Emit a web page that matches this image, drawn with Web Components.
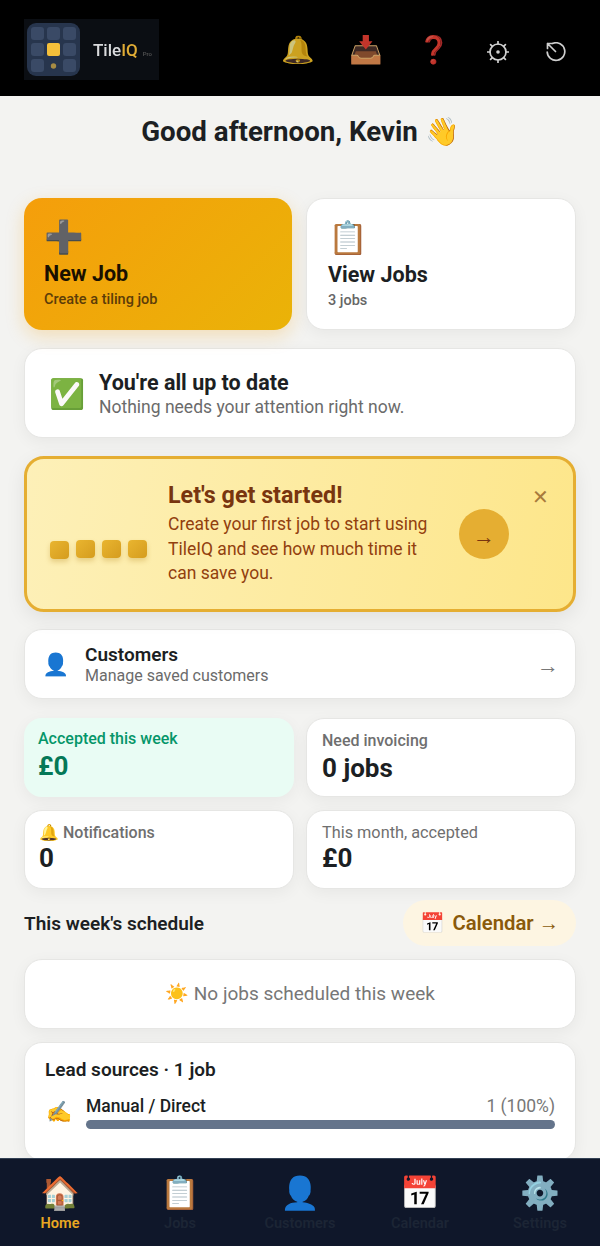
<!DOCTYPE html>
<html lang="en">
<head>
<meta charset="utf-8">
<title>TileIQ</title>
<style>
html, body { margin: 0; height: 100%; background: #f3f3f1; }
body { font-family: Roboto, "Liberation Sans", sans-serif; color: #1c1f23; }
</style>
</head>
<body>
<app-shell>
	<top-bar slot="top"></top-bar>
	<greeting-line>Good afternoon, Kevin 👋</greeting-line>
	<div style="display:grid;grid-template-columns:268px 270px;column-gap:14px;margin-top:50px">
		<action-card primary icon="➕" title="New Job" sub="Create a tiling job"></action-card>
		<action-card icon="📋" title="View Jobs" sub="3 jobs"></action-card>
	</div>
	<status-card></status-card>
	<start-banner></start-banner>
	<link-row></link-row>
	<div style="display:grid;grid-template-columns:270px 270px;gap:13px 12px;margin-top:19px">
		<stat-card green label="Accepted this week" value="£0"></stat-card>
		<stat-card label="Need invoicing" value="0 jobs"></stat-card>
		<stat-card small left label="🔔 Notifications" value="0"></stat-card>
		<stat-card small thin label="This month, accepted" value="£0"></stat-card>
	</div>
	<schedule-head></schedule-head>
	<empty-card>☀️ No jobs scheduled this week</empty-card>
	<lead-card></lead-card>
	<bottom-nav slot="nav"></bottom-nav>
</app-shell>

<script>
const card = 'background:#fff;border:1px solid #e6e6e4;border-radius:18px;box-shadow:0 4px 16px rgba(0,0,0,.05);box-sizing:border-box;';

class AppShell extends HTMLElement {
	constructor() {
		super();
		this.attachShadow({mode: 'open'}).innerHTML = `
	<style>
	:host { display: flex; flex-direction: column; height: 1246px; overflow: hidden; }
	main { flex: 1; min-height: 0; overflow: hidden; padding: 0 24px; display: block; }
	</style>
	<slot name="top"></slot>
	<main><slot></slot></main>
	<slot name="nav"></slot>`;
	}
}

class TopBar extends HTMLElement {
	constructor() {
		super();
		this.attachShadow({mode: 'open'}).innerHTML = `
	<style>
	:host { display: flex; align-items: center; height: 96px; background: #000; padding: 0 35px 0 24px; box-sizing: border-box; }
	.logo { width: 135px; height: 61px; margin-top: 3px; background: #0b0e13; display: flex; align-items: center; box-sizing: border-box; padding-left: 3px; flex: none; filter: blur(.5px); }
	.name { font-size: 17px; font-weight: 500; color: #d9dadc; margin-left: 13px; }
	.name b { color: #e0ac35; font-weight: 500; }
	.pro { font-size: 6px; color: #555; margin-left: 5px; }
	.icons { margin-left: auto; display: flex; align-items: center; gap: 38px; margin-top: 3px; }
	.icons span { font-size: 27px; width: 30px; display: flex; justify-content: center; line-height: 30px; opacity: .8; }
	svg.line { display: block; margin-top: 5px; }
	</style>
	<div class="logo">
		<svg width="53" height="53" viewBox="0 0 53 53">
			<rect width="53" height="53" rx="9" fill="#27354d"/>
			<g fill="#3a4a66">
				<rect x="4" y="4" width="13" height="13" rx="3"/><rect x="20" y="4" width="13" height="13" rx="3"/><rect x="36" y="4" width="13" height="13" rx="3"/>
				<rect x="4" y="20" width="13" height="13" rx="3"/><rect x="36" y="20" width="13" height="13" rx="3"/>
				<rect x="4" y="36" width="13" height="13" rx="3"/><rect x="36" y="36" width="13" height="13" rx="3"/>
			</g>
			<rect x="20" y="20" width="13" height="13" rx="2" fill="#f4bf3a"/>
			<circle cx="26.500" cy="43" r="2.700" fill="#a78c44"/>
		</svg>
		<span class="name">Tile<b>IQ</b><span class="pro">Pro</span></span>
	</div>
	<div class="icons">
		<span>🔔</span><span>📥</span><span>❓</span>
		<svg class="line" width="22" height="22" viewBox="0 0 22 22" fill="none" stroke="#cfcfcf" stroke-width="1.700">
			<circle cx="11" cy="11" r="8"/>
			<circle cx="11" cy="11" r="1.800" fill="#cfcfcf" stroke="none"/>
			<path d="M11 .5v2.500M11 19v2.500M.5 11H3M19 11h2.500M3.600 3.600l1.700 1.700M16.700 16.700l1.700 1.700M18.400 3.600l-1.700 1.700M5.300 16.700l-1.700 1.700" stroke-linecap="round"/>
		</svg>
		<svg class="line" width="20" height="20" viewBox="0 0 20 20" fill="none" stroke="#cfcfcf" stroke-width="1.700" stroke-linecap="round" stroke-linejoin="round" style="margin-left:-1px;margin-right:-1px">
			<path d="M7 1.300A8.800 8.800 0 1 1 1.200 10"/>
			<path d="M9.500 9.500L1.500 1.500M1.500 6.500v-5h5"/>
		</svg>
	</div>`;
	}
}

class GreetingLine extends HTMLElement {
	constructor() {
		super();
		this.attachShadow({mode: 'open'}).innerHTML = `
	<style>
	:host { display: block; text-align: center; font-size: 27.700px; font-weight: 700; line-height: 32px; margin-top: 20px; }
	</style>
	<slot></slot>`;
	}
}

class ActionCard extends HTMLElement {
	constructor() {
		super();
		this.attachShadow({mode: 'open'}).innerHTML = `
	<style>
	:host { display: block; height: 132px; ${card} padding: 20px 21px; }
	:host([primary]) { background: linear-gradient(135deg, #f59e0b, #eab308); border: 0; padding: 20px; box-shadow: 0 6px 18px rgba(245,158,11,.25); }
	.i { font-size: 32px; line-height: 38px; }
	.t { font-size: 21.500px; font-weight: 700; line-height: 28px; margin-top: 4px; color: #1c1f23; }
	:host([primary]) .t { color: #1a1000; }
	.s { font-size: 14.500px; font-weight: 500; color: #666; margin-top: 3px; }
	:host([primary]) .s { color: #5c3d08; }
	</style>
	<div class="i">${this.getAttribute('icon')}</div>
	<div class="t">${this.getAttribute('title')}</div>
	<div class="s">${this.getAttribute('sub')}</div>`;
	}
}

class StatusCard extends HTMLElement {
	constructor() {
		super();
		this.attachShadow({mode: 'open'}).innerHTML = `
	<style>
	:host { display: flex; align-items: center; gap: 14px; height: 90px; margin-top: 18px; ${card} padding: 2px 24px 0; }
	.i { font-size: 29px; }
	.t { font-size: 21.500px; font-weight: 700; line-height: 26px; }
	.s { font-size: 17.500px; color: #6b6b6b; line-height: 23px; }
	</style>
	<div class="i">✅</div>
	<div><div class="t">You're all up to date</div><div class="s">Nothing needs your attention right now.</div></div>`;
	}
}

class StartBanner extends HTMLElement {
	constructor() {
		super();
		this.attachShadow({mode: 'open'}).innerHTML = `
	<style>
	:host { display: flex; position: relative; height: 156px; margin-top: 18px; box-sizing: border-box; border: 3px solid #e5ae32; border-radius: 20px; background: linear-gradient(100deg, #fdf0b8, #fde68a); box-shadow: 0 6px 20px rgba(0,0,0,.08); }
	.tiles { display: flex; gap: 7.500px; align-items: flex-end; width: 118px; padding: 0 0 51px 23px; box-sizing: border-box; flex: none; }
	.tiles i { flex: none; width: 18.500px; height: 18.500px; border-radius: 4px; background: linear-gradient(135deg, #e9b530, #d59c1e); box-shadow: 0 3px 5px rgba(180,130,20,.3); }
	.tiles i:first-child { margin-bottom: -1px; }
	.text { padding: 22px 0 0 23px; width: 295px; box-sizing: border-box; flex: none; }
	.t { font-size: 23.300px; font-weight: 700; color: #78350f; line-height: 28px; }
	.s { font-size: 17.500px; line-height: 24.500px; color: #92400e; margin-top: 3px; }
	.go { width: 50px; height: 50px; border-radius: 50%; background: #e5ae32; color: #78350f; font-size: 22px; font-weight: 700; display: flex; align-items: center; justify-content: center; margin: 50px 0 0 19px; flex: none; padding-top: 5px; box-sizing: border-box; }
	.x { position: absolute; right: 24px; top: 24px; color: #a87a3c; font-size: 20px; line-height: 28px; }
	</style>
	<div class="tiles"><i></i><i></i><i></i><i></i></div>
	<div class="text"><div class="t">Let's get started!</div><div class="s">Create your first job to start using TileIQ and see how much time it can save you.</div></div>
	<div class="go">→</div>
	<div class="x">✕</div>`;
	}
}

class LinkRow extends HTMLElement {
	constructor() {
		super();
		this.attachShadow({mode: 'open'}).innerHTML = `
	<style>
	:host { display: flex; align-items: center; height: 70px; margin-top: 17px; ${card} padding: 0 16px 0 17px; gap: 16px; }
	.i { font-size: 22px; flex: none; }
	.t { font-size: 19px; font-weight: 600; line-height: 24px; }
	.s { font-size: 16px; color: #6b6b6b; line-height: 18px; }
	.a { margin-left: auto; color: #777; font-size: 22px; margin-top: 4px; }
	</style>
	<span class="i">👤</span>
	<div><div class="t">Customers</div><div class="s">Manage saved customers</div></div>
	<span class="a">→</span>`;
	}
}

class StatCard extends HTMLElement {
	constructor() {
		super();
		this.attachShadow({mode: 'open'}).innerHTML = `
	<style>
	:host { display: block; height: 79px; ${card} padding: 12px 15px 0; }
	:host([green]) { background: #e9fcf4; border: 0; padding: 11px 14px 0; }
	:host([left]) { padding-left: 14px; }
	.l { font-size: 16px; font-weight: 500; color: #6f6f6f; line-height: 20px; }
	:host([thin]) .l { font-weight: 400; font-size: 16.300px; }
	:host([green]) .l { color: #059669; }
	.v { font-size: 26px; font-weight: 700; line-height: 34px; color: #1c1f23; }
	:host([small]) .v { margin-top: -2px; }
	:host([green]) .v { color: #047857; }
	</style>
	<div class="l">${this.getAttribute('label')}</div>
	<div class="v">${this.getAttribute('value')}</div>`;
	}
}

class ScheduleHead extends HTMLElement {
	constructor() {
		super();
		this.attachShadow({mode: 'open'}).innerHTML = `
	<style>
	:host { display: flex; align-items: center; justify-content: space-between; height: 46px; margin-top: 11px; }
	.t { font-size: 19px; font-weight: 600; }
	.p { background: #fdf5e2; border-radius: 23px; height: 46px; display: flex; align-items: center; padding: 0 17px; gap: 7px; font-size: 20.300px; font-weight: 600; color: #8a5a0b; }
	.e { font-size: 20px; }
	</style>
	<span class="t">This week's schedule</span>
	<span class="p"><span class="e">📅</span><span>Calendar →</span></span>`;
	}
}

class EmptyCard extends HTMLElement {
	constructor() {
		super();
		this.attachShadow({mode: 'open'}).innerHTML = `
	<style>
	:host { display: flex; align-items: center; justify-content: center; height: 70px; margin-top: 13px; ${card} padding-bottom: 2px; font-size: 19px; color: #777; }
	</style>
	<slot></slot>`;
	}
}

class LeadCard extends HTMLElement {
	constructor() {
		super();
		this.attachShadow({mode: 'open'}).innerHTML = `
	<style>
	:host { display: block; margin-top: 13px; ${card} padding: 15px 20px 31px; }
	.h { font-size: 19px; font-weight: 600; line-height: 24px; margin-bottom: 13px; }
	.r { display: flex; align-items: center; gap: 16px; }
	.i { font-size: 21px; width: 25px; margin-left: 1px; margin-right: -1px; }
	.b { flex: 1; }
	.top { display: flex; justify-content: space-between; font-size: 17.500px; font-weight: 500; line-height: 22px; }
	.top span:last-child { color: #777; font-weight: 400; }
	.bar { height: 9px; border-radius: 5px; background: #64748b; margin-top: 3px; }
	</style>
	<div class="h">Lead sources · 1 job</div>
	<div class="r"><span class="i">✍️</span><div class="b"><div class="top"><span>Manual / Direct</span><span>1 (100%)</span></div><div class="bar"></div></div></div>`;
	}
}

class BottomNav extends HTMLElement {
	constructor() {
		super();
		const items = [['🏠', 'Home'], ['📋', 'Jobs'], ['👤', 'Customers'], ['📅', 'Calendar'], ['⚙️', 'Settings']];
		this.attachShadow({mode: 'open'}).innerHTML = `
	<style>
	:host { display: grid; grid-template-columns: repeat(5, 1fr); height: 88px; background: #0f172a; border-top: 1px solid #334155; box-sizing: border-box; padding-top: 13px; text-align: center; }
	.i { font-size: 32px; line-height: 42px; }
	.l { font-size: 14.500px; font-weight: 600; color: #1c2535; line-height: 20px; }
	.on .l { color: #e9a722; }
	</style>
	${items.map((it, n) => `<div class="${n ? '' : 'on'}"><div class="i">${it[0]}</div><div class="l">${it[1]}</div></div>`).join('')}`;
	}
}

customElements.define('app-shell', AppShell);
customElements.define('top-bar', TopBar);
customElements.define('greeting-line', GreetingLine);
customElements.define('action-card', ActionCard);
customElements.define('status-card', StatusCard);
customElements.define('start-banner', StartBanner);
customElements.define('link-row', LinkRow);
customElements.define('stat-card', StatCard);
customElements.define('schedule-head', ScheduleHead);
customElements.define('empty-card', EmptyCard);
customElements.define('lead-card', LeadCard);
customElements.define('bottom-nav', BottomNav);
</script>
</body>
</html>
